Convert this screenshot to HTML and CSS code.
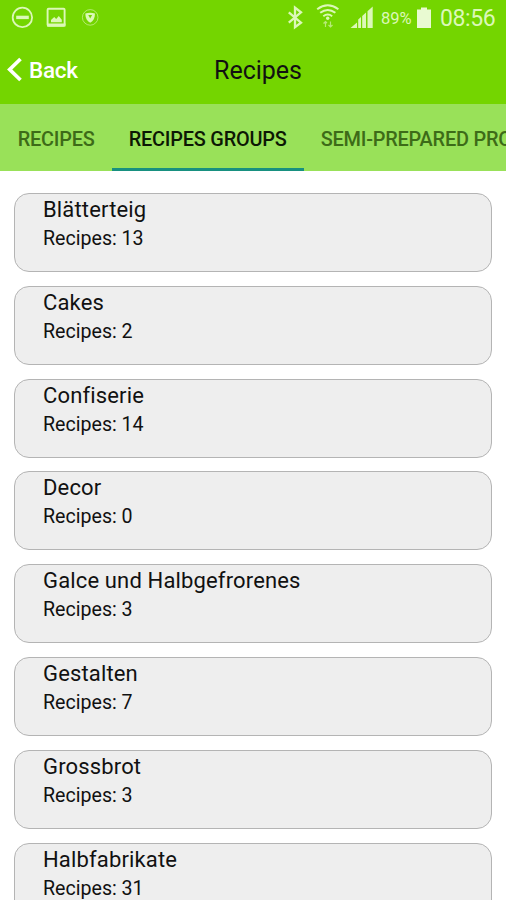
FILE: index.html
```html
<!DOCTYPE html>
<html lang="en">
<head>
<meta charset="utf-8">
<title>Recipes</title>
<link rel="stylesheet" href="styles.css">
</head>
<body>
<div class="status">
  <svg class="status-left" width="110" height="36" viewBox="0 0 110 36" fill="none" stroke="#dcf8b8">
    <circle cx="22.4" cy="17.4" r="9.7" stroke-width="1.8"/>
    <path d="M16.2 17.4H28.8" stroke-width="3.4"/>
    <rect x="47.6" y="8.700" width="17" height="17" rx="1" stroke-width="1.9"/>
    <path d="M47 25H65.500" stroke-width="3"/>
    <path d="M51 22.2V20l3.2-3 2 2 2.6-3 3 3.700V22.200Z" fill="#dcf8b8" stroke="none"/>
    <circle cx="90.200" cy="17.400" r="7.800" stroke-width="1" opacity=".6"/>
    <path d="M85.300 13.500Q90.200 11.800 95 13.500C95 18 93.300 21 90.200 22.800C87 21 85.300 18 85.300 13.500Z" fill="#dcf8b8" stroke="none"/>
    <path d="M88.300 15h3.800l-1.900 3.600Z" fill="#74d500" stroke="none"/>
  </svg>
  <div class="status-right">
    <svg width="90" height="36" viewBox="286 0 90 36" fill="none" stroke="#dcf8b8">
      <path d="M288.800 12.300L301 22.700L295 27.200V7.600L301 12.300L288.800 22.700" stroke-width="2.300"/>
      <path d="M317.200 9.200Q327.700 1.400 338.400 9.200M320.200 12.800Q327.700 7.200 335.400 12.800M323.300 16.200Q327.700 13 332.200 16.200" stroke-width="2"/>
      <circle cx="327.700" cy="18.200" r="1.700" fill="#dcf8b8" stroke="none"/>
      <path d="M325.500 27V21.500M323.500 23.500l2-2 1.500 1.500M330.500 21.500V27M328.500 25l2 2 2-2" stroke-width="1.200" opacity=".65"/>
      <path d="M350.500 28L357 22.500V28ZM358.200 28V19.500L361 17.100V28Z" fill="#dcf8b8" stroke="none"/>
      <path d="M362.200 28V16L366 12.500V28ZM367.500 28V11.200L372.700 6.500V28Z" fill="#dcf8b8" stroke="none"/>
    </svg>
    <span class="percent">89%</span>
    <svg class="battery" width="16" height="36" viewBox="416 0 16 36"><path d="M417 9.500h4V7.500h6v2h4V28H417Z" fill="#e9fad2"/></svg>
    <span class="clock">08:56</span>
  </div>
</div>
<header class="bar">
  <a class="back"><svg width="22" height="28" viewBox="0 0 22 28"><path d="M20.500 3L9.700 13.500L20.500 24" fill="none" stroke="#fff" stroke-width="3.700"/></svg><span>Back</span></a>
  <h1 class="title"><span>Recipes</span></h1>
</header>
<nav class="tabs">
  <a class="tab">RECIPES</a>
  <a class="tab active">RECIPES GROUPS</a>
  <a class="tab">SEMI-PREPARED PRODUCTS</a>
</nav>
<main class="list">
  <section class="card"><h2>Blätterteig</h2><p>Recipes: 13</p></section>
  <section class="card"><h2>Cakes</h2><p>Recipes: 2</p></section>
  <section class="card"><h2>Confiserie</h2><p>Recipes: 14</p></section>
  <section class="card"><h2>Decor</h2><p>Recipes: 0</p></section>
  <section class="card"><h2>Galce und Halbgefrorenes</h2><p>Recipes: 3</p></section>
  <section class="card"><h2>Gestalten</h2><p>Recipes: 7</p></section>
  <section class="card"><h2>Grossbrot</h2><p>Recipes: 3</p></section>
  <section class="card"><h2>Halbfabrikate</h2><p>Recipes: 31</p></section>
</main>
</body>
</html>
```
FILE: styles.css
```css
* { box-sizing: border-box; }
body {
  margin: 0;
  height: 900px;
  overflow: hidden;
  background: #fff;
  color: #111;
  font-family: Roboto, "Liberation Sans", sans-serif;
}
svg { display: block; flex: none; }
.status {
  display: flex;
  justify-content: space-between;
  height: 36px;
  padding-right: 10px;
  background: #74d500;
  color: #dcf8b8;
}
.status-right { display: flex; align-items: center; white-space: nowrap; }
.percent { width: 40px; padding-left: 5px; font-size: 16.500px; }
.clock { width: 56px; margin-left: 8px; font-size: 23px; letter-spacing: -.4px; }
.bar {
  display: grid;
  grid-template-columns: 1fr auto 1fr;
  align-items: center;
  height: 68px;
  background: #74d500;
}
.back { display: flex; align-items: center; gap: 7px; color: #fff; font-size: 22.500px; font-weight: 500; letter-spacing: -.3px; }
.title { margin: 2px -5px 0 5px; font-size: 25px; font-weight: 400; line-height: 32px; }
.tabs {
  display: flex;
  height: 67px;
  padding-left: .7px;
  background: #99e159;
  overflow: hidden;
}
.tab {
  flex: none;
  padding: 0 17px;
  font-size: 19.900px;
  font-weight: 500;
  line-height: 72px;
  letter-spacing: -.2px;
  color: #3d6b18;
  white-space: nowrap;
}
.tab.active { height: 67px; color: #0c1804; border-bottom: 3px solid #179080; }
.list { display: flex; flex-direction: column; gap: 13.800px; padding: 22px 14px 0; }
.card {
  flex: none;
  height: 79px;
  padding: 2px 28px 0;
  border: 1.500px solid #b4b4b4;
  border-radius: 15px;
  background: #eee;
}
.card h2 { margin: 0; font-size: 22px; font-weight: 400; line-height: 28px; letter-spacing: .15px; }
.card p { margin: 1px 0 0; font-size: 19.600px; line-height: 28px; }
```
